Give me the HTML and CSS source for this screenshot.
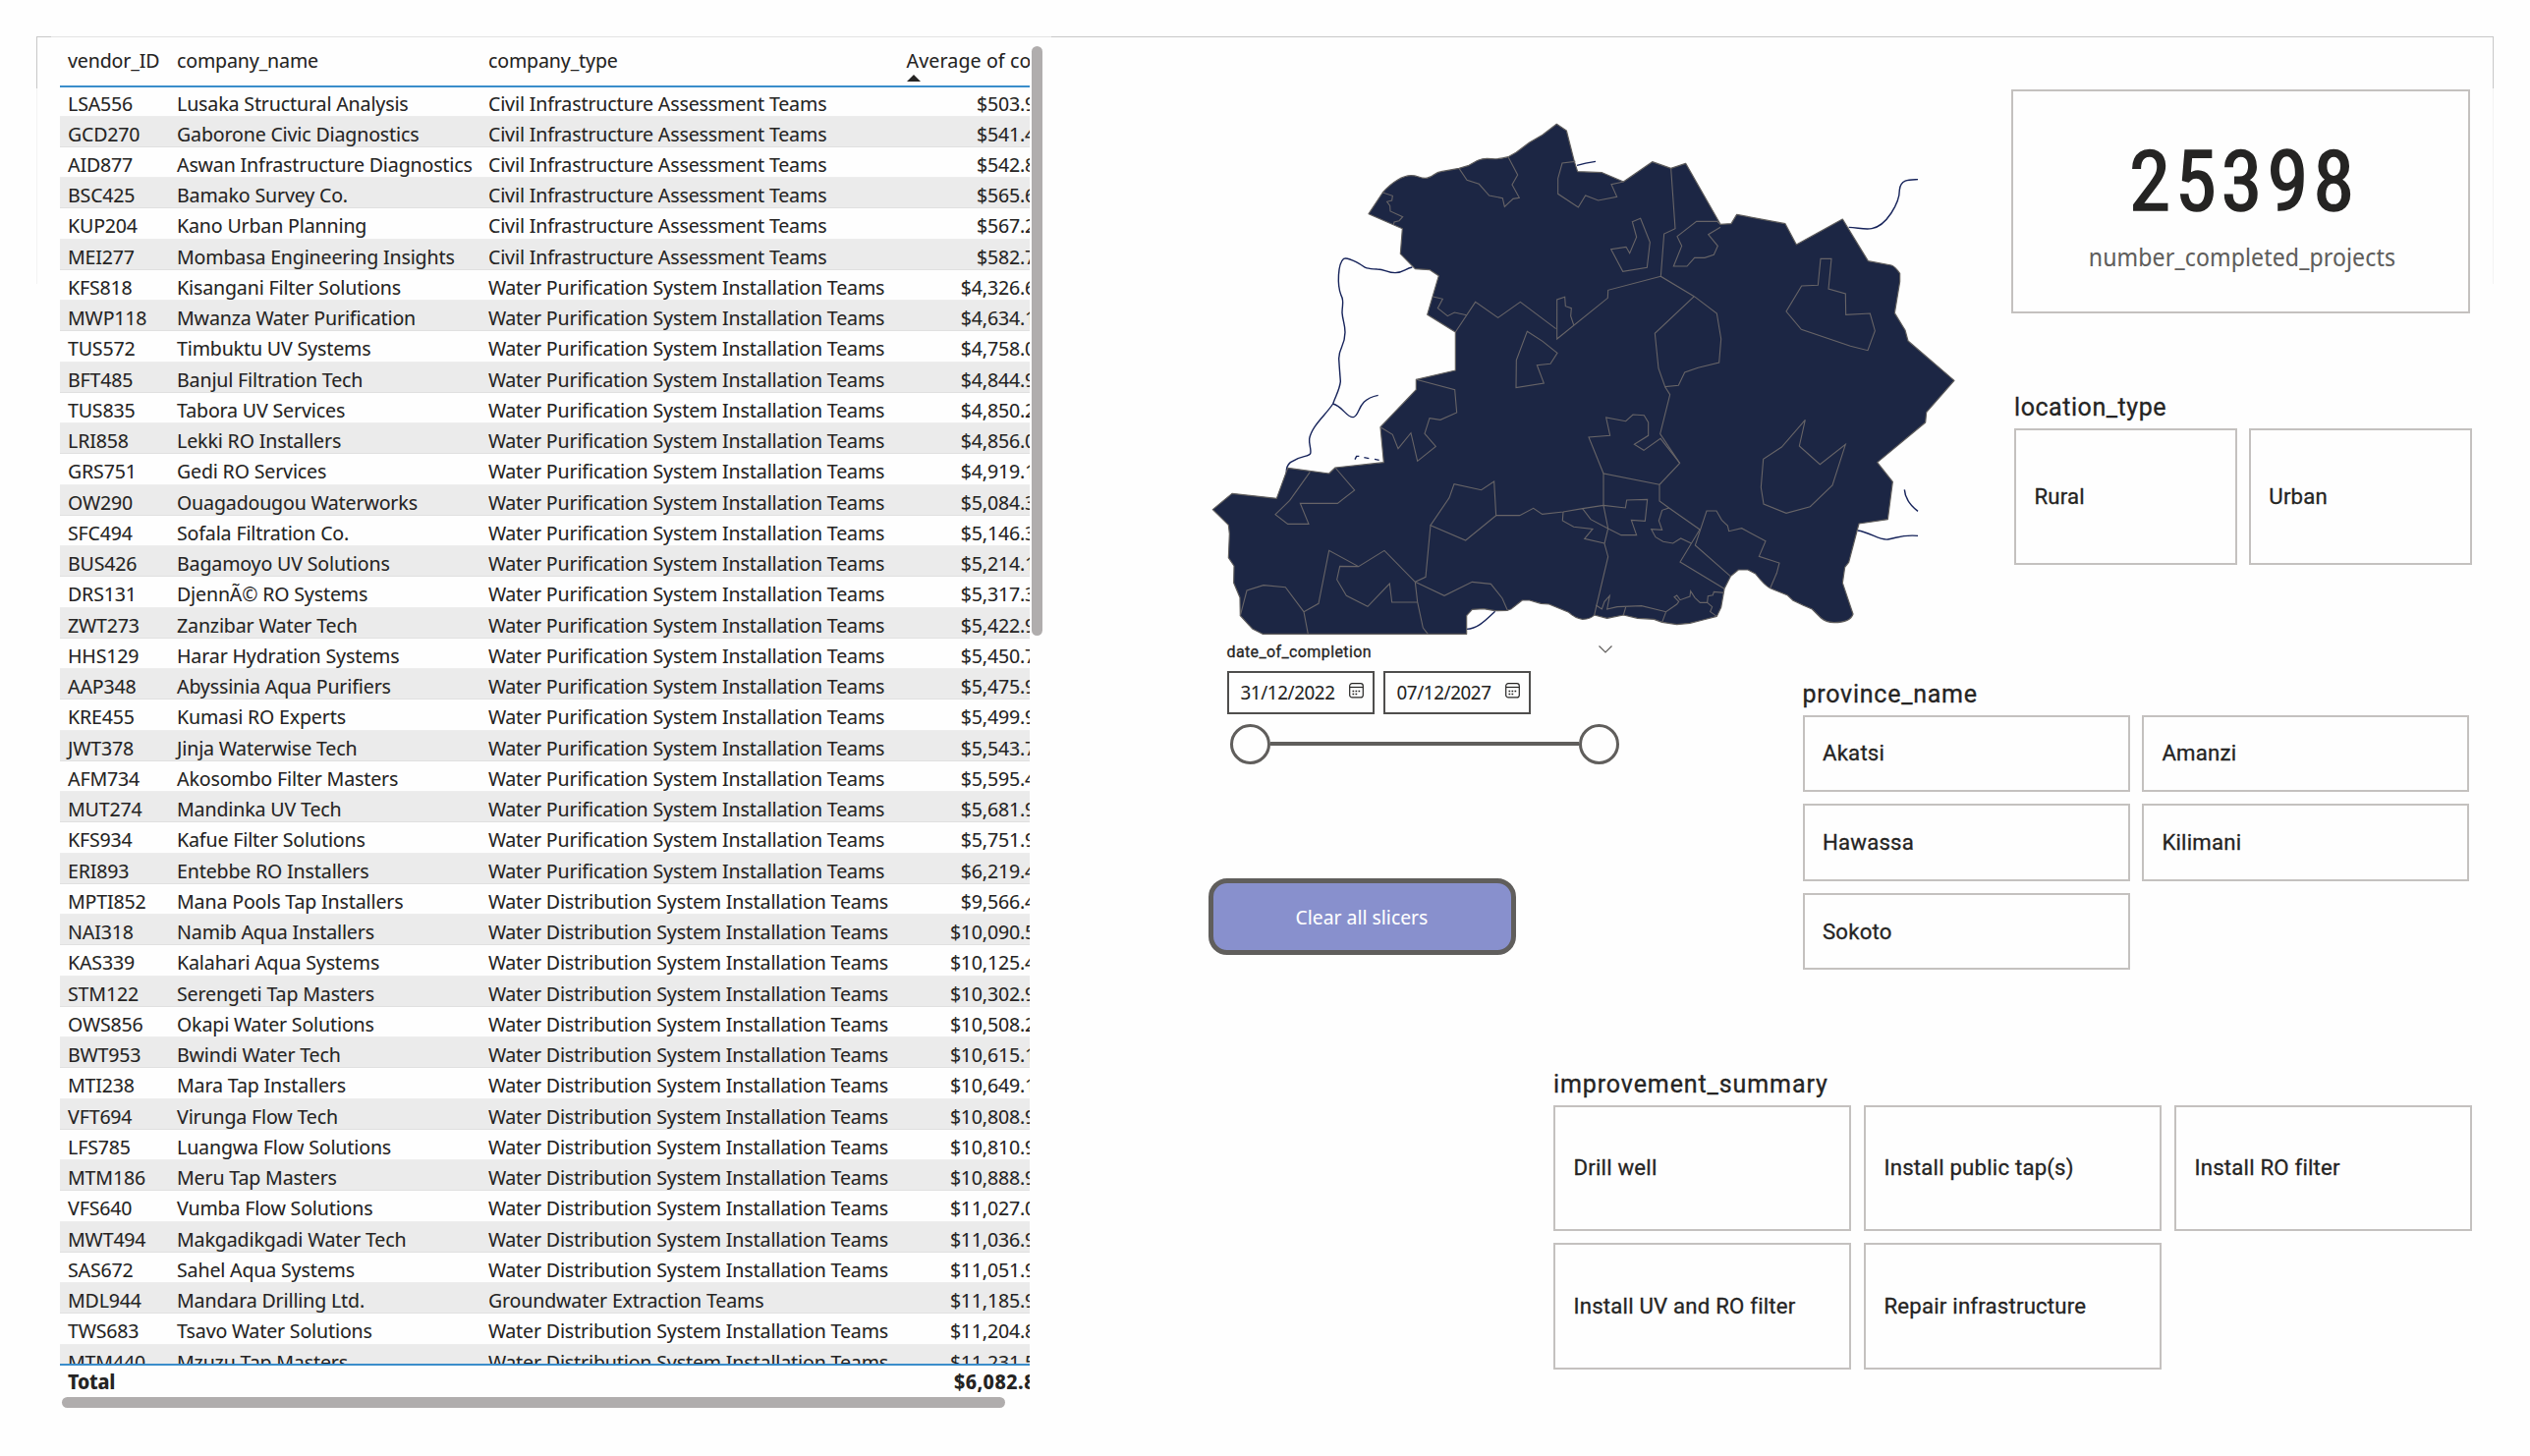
FILE: index.html
```
<!DOCTYPE html>
<html lang="en">
<head>
<meta charset="utf-8">
<title>Completed water projects</title>
<link rel="stylesheet" href="styles.css">
</head>
<body>
<main class="report">
  <section class="vendors">
    <div class="vendors-top">
      <div class="table">
        <div class="row head"><span>vendor_ID</span><span>company_name</span><span>company_type</span><span class="sorted">Average of co<svg class="sort" width="14" height="7" viewBox="0 0 14 7"><path d="M0 7 7 0 14 7z" fill="#252423"/></svg></span></div>
        <div class="body">
          <div class="row"><span>LSA556</span><span>Lusaka Structural Analysis</span><span>Civil Infrastructure Assessment Teams</span><span>$503.9</span></div>
          <div class="row"><span>GCD270</span><span>Gaborone Civic Diagnostics</span><span>Civil Infrastructure Assessment Teams</span><span>$541.4</span></div>
          <div class="row"><span>AID877</span><span>Aswan Infrastructure Diagnostics</span><span>Civil Infrastructure Assessment Teams</span><span>$542.8</span></div>
          <div class="row"><span>BSC425</span><span>Bamako Survey Co.</span><span>Civil Infrastructure Assessment Teams</span><span>$565.6</span></div>
          <div class="row"><span>KUP204</span><span>Kano Urban Planning</span><span>Civil Infrastructure Assessment Teams</span><span>$567.2</span></div>
          <div class="row"><span>MEI277</span><span>Mombasa Engineering Insights</span><span>Civil Infrastructure Assessment Teams</span><span>$582.7</span></div>
          <div class="row"><span>KFS818</span><span>Kisangani Filter Solutions</span><span>Water Purification System Installation Teams</span><span>$4,326.6</span></div>
          <div class="row"><span>MWP118</span><span>Mwanza Water Purification</span><span>Water Purification System Installation Teams</span><span>$4,634.1</span></div>
          <div class="row"><span>TUS572</span><span>Timbuktu UV Systems</span><span>Water Purification System Installation Teams</span><span>$4,758.0</span></div>
          <div class="row"><span>BFT485</span><span>Banjul Filtration Tech</span><span>Water Purification System Installation Teams</span><span>$4,844.9</span></div>
          <div class="row"><span>TUS835</span><span>Tabora UV Services</span><span>Water Purification System Installation Teams</span><span>$4,850.2</span></div>
          <div class="row"><span>LRI858</span><span>Lekki RO Installers</span><span>Water Purification System Installation Teams</span><span>$4,856.0</span></div>
          <div class="row"><span>GRS751</span><span>Gedi RO Services</span><span>Water Purification System Installation Teams</span><span>$4,919.1</span></div>
          <div class="row"><span>OW290</span><span>Ouagadougou Waterworks</span><span>Water Purification System Installation Teams</span><span>$5,084.3</span></div>
          <div class="row"><span>SFC494</span><span>Sofala Filtration Co.</span><span>Water Purification System Installation Teams</span><span>$5,146.3</span></div>
          <div class="row"><span>BUS426</span><span>Bagamoyo UV Solutions</span><span>Water Purification System Installation Teams</span><span>$5,214.1</span></div>
          <div class="row"><span>DRS131</span><span>DjennÃ© RO Systems</span><span>Water Purification System Installation Teams</span><span>$5,317.3</span></div>
          <div class="row"><span>ZWT273</span><span>Zanzibar Water Tech</span><span>Water Purification System Installation Teams</span><span>$5,422.9</span></div>
          <div class="row"><span>HHS129</span><span>Harar Hydration Systems</span><span>Water Purification System Installation Teams</span><span>$5,450.7</span></div>
          <div class="row"><span>AAP348</span><span>Abyssinia Aqua Purifiers</span><span>Water Purification System Installation Teams</span><span>$5,475.9</span></div>
          <div class="row"><span>KRE455</span><span>Kumasi RO Experts</span><span>Water Purification System Installation Teams</span><span>$5,499.9</span></div>
          <div class="row"><span>JWT378</span><span>Jinja Waterwise Tech</span><span>Water Purification System Installation Teams</span><span>$5,543.7</span></div>
          <div class="row"><span>AFM734</span><span>Akosombo Filter Masters</span><span>Water Purification System Installation Teams</span><span>$5,595.4</span></div>
          <div class="row"><span>MUT274</span><span>Mandinka UV Tech</span><span>Water Purification System Installation Teams</span><span>$5,681.9</span></div>
          <div class="row"><span>KFS934</span><span>Kafue Filter Solutions</span><span>Water Purification System Installation Teams</span><span>$5,751.9</span></div>
          <div class="row"><span>ERI893</span><span>Entebbe RO Installers</span><span>Water Purification System Installation Teams</span><span>$6,219.4</span></div>
          <div class="row"><span>MPTI852</span><span>Mana Pools Tap Installers</span><span>Water Distribution System Installation Teams</span><span>$9,566.4</span></div>
          <div class="row"><span>NAI318</span><span>Namib Aqua Installers</span><span>Water Distribution System Installation Teams</span><span>$10,090.5</span></div>
          <div class="row"><span>KAS339</span><span>Kalahari Aqua Systems</span><span>Water Distribution System Installation Teams</span><span>$10,125.4</span></div>
          <div class="row"><span>STM122</span><span>Serengeti Tap Masters</span><span>Water Distribution System Installation Teams</span><span>$10,302.9</span></div>
          <div class="row"><span>OWS856</span><span>Okapi Water Solutions</span><span>Water Distribution System Installation Teams</span><span>$10,508.2</span></div>
          <div class="row"><span>BWT953</span><span>Bwindi Water Tech</span><span>Water Distribution System Installation Teams</span><span>$10,615.1</span></div>
          <div class="row"><span>MTI238</span><span>Mara Tap Installers</span><span>Water Distribution System Installation Teams</span><span>$10,649.1</span></div>
          <div class="row"><span>VFT694</span><span>Virunga Flow Tech</span><span>Water Distribution System Installation Teams</span><span>$10,808.9</span></div>
          <div class="row"><span>LFS785</span><span>Luangwa Flow Solutions</span><span>Water Distribution System Installation Teams</span><span>$10,810.9</span></div>
          <div class="row"><span>MTM186</span><span>Meru Tap Masters</span><span>Water Distribution System Installation Teams</span><span>$10,888.9</span></div>
          <div class="row"><span>VFS640</span><span>Vumba Flow Solutions</span><span>Water Distribution System Installation Teams</span><span>$11,027.0</span></div>
          <div class="row"><span>MWT494</span><span>Makgadikgadi Water Tech</span><span>Water Distribution System Installation Teams</span><span>$11,036.9</span></div>
          <div class="row"><span>SAS672</span><span>Sahel Aqua Systems</span><span>Water Distribution System Installation Teams</span><span>$11,051.9</span></div>
          <div class="row"><span>MDL944</span><span>Mandara Drilling Ltd.</span><span>Groundwater Extraction Teams</span><span>$11,185.9</span></div>
          <div class="row"><span>TWS683</span><span>Tsavo Water Solutions</span><span>Water Distribution System Installation Teams</span><span>$11,204.8</span></div>
          <div class="row"><span>MTM440</span><span>Mzuzu Tap Masters</span><span>Water Distribution System Installation Teams</span><span>$11,231.5</span></div>
        </div>
        <div class="row total"><span>Total</span><span></span><span></span><span>$6,082.8</span></div>
      </div>
      <div class="scroll-y"></div>
    </div>
    <div class="scroll-x"></div>
  </section>

  <section class="side">
    <div class="band band-map">
      <svg class="map" width="780" height="550" viewBox="0 0 2340 1650">
        <g class="river">
          <path d="M652 516C630 520 625 533 600 533S570 522 545 522C500 520 510 516 490 505C470 495 455 485 443 490C425 505 422 570 435 602C445 620 438 630 438 655C440 680 447 690 447 715C446 760 430 755 428 795C430 830 432 850 433 865C430 890 420 905 410 933C390 965 345 1000 338 1040C336 1055 345 1075 341 1085C335 1097 315 1088 280 1112C270 1120 267 1130 268 1145"/>
          <path d="M410 933C440 940 450 975 472 974C495 970 480 920 548 907"/>
          <path d="M477 1103 482 1093H490M505 1097l15 3M537 1102l14 3"/>
          <path d="M1155 205Q1180 197 1212 193"/>
          <path d="M1985 394C2010 394 2030 402 2055 398C2100 390 2140 320 2140 280C2143 245 2175 249 2196 248"/>
          <path d="M2155 1195C2157 1225 2175 1245 2196 1261"/>
          <path d="M2012 1320C2050 1325 2080 1352 2105 1347C2140 1340 2150 1332 2196 1336"/>
          <path d="M818 1621C850 1620 870 1600 905 1567"/>
        </g>
        <path class="land" d="M519 353 562 288C590 255 625 236 648 236S672 244 692 244 720 227 740 224L795 214 825 205C850 190 860 184 880 184S905 190 945 179L970 165 1010 135 1050 112 1093 79 1123 99 1147 193 1157 224 1232 227 1297 255 1385 194 1442 214 1487 199 1593 385 1626 383 1643 355 1791 383 1825 447 1966 369 2044 497 2115 510Q2126 513 2141 535V560L2125 656 2157 708 2166 741 2307 862 2222 959 2219 990 2072 1112 2119 1171 2104 1286 2016 1299 1985 1417 1973 1432 1966 1480 1998 1575Q1990 1601 1940 1601 1915 1600 1900 1587L1873 1560 1845 1548 1815 1534 1797 1517 1745 1496Q1730 1490 1700 1452L1677 1440H1648L1624 1460 1605 1498 1595 1555 1582 1582 1540 1593 1500 1603 1460 1607 1415 1600 1390 1591 1340 1588 1297 1578 1247 1588 1208 1578Q1198 1590 1172 1591 1150 1588 1130 1570L1070 1545 1045 1543 1010 1533H988L955 1559 943 1564 905 1565 870 1559 835 1561 818 1580V1636H195L165 1621 127 1580 126 1525 107 1480 108 1428 91 1403 94 1330 91 1303 43 1256 102 1207 238 1222 272 1129 398 1146 417 1128 565 1112 555 1004 664 890V859L784 831V714L698 661 733 542 706 524 661 521 616 475 622 398z"/>
        <g class="border">
          <path d="M562 288 592 298 590 312 575 316 584 328 585 345 623 362 612 374 597 378 595 386"/>
          <path d="M795 214 819 250 856 262 887 297 928 305 934 331 960 307 979 304 957 264 974 234 945 179"/>
          <path d="M1150 193 1110 198 1097 245V292L1159 333 1181 297 1220 312 1277 301 1260 263 1297 255"/>
          <path d="M716 606 745 613 730 641 760 665 781 654 818 662"/>
          <path d="M784 714 845 622 914 670 982 622 1091 704"/>
          <path d="M1145 692 1136 665 1138 641 1120 635 1118 607 1094 615V735L1249 610 1250 586 1411 544"/>
          <path d="M1003 712 1050 742 1095 778 1074 811 1033 815 1054 870 969 884 970 800z"/>
          <path d="M664 859 782 890 788 960 738 982 705 977 690 1024 724 1063 668 1108 648 1022 609 1070 592 1027 555 1004"/>
          <path d="M1324 377 1349 367 1378 440 1369 517 1295 529 1259 461 1305 454 1316 473 1337 424z"/>
          <path d="M1442 214 1455 398 1421 414 1411 544 1513 605 1582 657 1595 735 1589 807 1525 823 1484 837 1465 877 1424 881 1404 825 1393 718 1513 605"/>
          <path d="M1424 881 1439 905 1409 1025 1469 1114 1407 1180V1230L1436 1251 1530 1317 1470 1416 1605 1498"/>
          <path d="M1593 385 1583 376H1520L1461 422 1475 451 1450 513H1491L1514 487H1545L1573 478 1585 451 1556 416 1593 394"/>
          <path d="M1899 490H1932L1923 582 1975 597 1976 661 2050 657 2065 710 2043 770 1990 757 1840 706 1794 651 1841 573 1891 571z"/>
          <path d="M1236 1146 1191 1035 1256 1030 1244 975 1304 986 1326 966 1360 968 1373 990V1030L1330 1057 1359 1075 1410 1039 1469 1114"/>
          <path d="M1407 1180 1236 1146V1243L1250 1314 1239 1360 1250 1400 1215 1548 1208 1578"/>
          <path d="M908 1274H980L1022 1252 1049 1270 1113 1263 1172 1253 1236 1243 1303 1251 1307 1227 1370 1225 1363 1291 1321 1288 1337 1334H1290L1250 1314 1197 1286 1172 1253"/>
          <path d="M1113 1263 1111 1290 1145 1309 1203 1315 1178 1345 1239 1359"/>
          <path d="M1436 1251 1415 1258 1405 1290 1415 1318 1382 1316 1395 1340 1418 1354 1448 1359 1472 1344 1504 1359"/>
          <path d="M1745 1496 1765 1450 1773 1419 1711 1399 1731 1352 1658 1313 1619 1322 1615 1305 1597 1288 1581 1260H1551L1516 1365 1624 1460"/>
          <path d="M1852 982 1834 1062 1897 1118 1975 1057 1935 1182 1867 1247 1794 1267 1725 1239 1717 1188 1724 1102 1780 1065z"/>
          <path d="M1213 1548 1231 1560 1239 1537 1255 1519 1247 1560 1278 1553 1352 1550 1427 1568 1460 1545 1466 1537 1452 1523 1460 1518 1470 1532 1500 1521 1502 1505 1515 1525 1531 1540 1553 1540 1555 1520 1570 1517 1573 1507 1605 1510M1427 1568 1415 1600M1304 1554 1297 1578M1553 1540 1568 1553 1562 1568 1582 1582"/>
          <path d="M340 1141 278 1228 234 1271 272 1300H336L310 1237H424L476 1197 417 1128"/>
          <path d="M708 1304 765 1220 780 1178 863 1196 902 1170 908 1274 815 1350z"/>
          <path d="M708 1304 693 1462 661 1477 567 1381 488 1430 398 1381 366 1543 321 1568 265 1493 198 1487 147 1503 127 1580M321 1568 334 1636"/>
          <path d="M488 1430 431 1429 422 1470 451 1519 516 1552 583 1482 590 1539H668M661 1477 668 1538 685 1617 700 1636M661 1477 750 1519 835 1477 892 1483 927 1527 943 1564"/>
        </g>
      </svg>
      <div class="kpi-col">
        <div class="kpi">
          <div class="kpi-value">25398</div>
          <div class="kpi-label">number_completed_projects</div>
        </div>
        <div class="slicer location">
          <h2>location_type</h2>
          <div class="tiles"><div class="tile">Rural</div><div class="tile">Urban</div></div>
        </div>
      </div>
    </div>

    <div class="band band-controls">
      <div class="controls">
        <div class="date-head"><h3>date_of_completion</h3>
          <svg width="14" height="8" viewBox="0 0 14 8"><path d="M.5.5 7 7 13.500.5" fill="none" stroke="#605e5c" stroke-width="1.2"/></svg>
        </div>
        <div class="dates">
          <div class="date">31/12/2022<svg width="15" height="16" viewBox="0 0 15 16"><rect x=".7" y=".7" width="13.600" height="14.200" rx="2.500"/><path d="M1 4.500H14"/><path d="M3.500 8.500h8M3.500 11.500h5" stroke-width="1.700" stroke-dasharray="1.700 1.300"/></svg></div>
          <div class="date">07/12/2027<svg width="15" height="16" viewBox="0 0 15 16"><rect x=".7" y=".7" width="13.600" height="14.200" rx="2.500"/><path d="M1 4.500H14"/><path d="M3.500 8.500h8M3.500 11.500h5" stroke-width="1.700" stroke-dasharray="1.700 1.300"/></svg></div>
        </div>
        <div class="slider"><i class="knob"></i><i class="track"></i><i class="knob"></i></div>
        <div class="clear">Clear all slicers</div>
      </div>
      <div class="slicer province">
        <h2>province_name</h2>
        <div class="tiles"><div class="tile">Akatsi</div><div class="tile">Amanzi</div><div class="tile">Hawassa</div><div class="tile">Kilimani</div><div class="tile">Sokoto</div></div>
      </div>
    </div>

    <div class="slicer improvement">
      <h2>improvement_summary</h2>
      <div class="tiles"><div class="tile">Drill well</div><div class="tile">Install public tap(s)</div><div class="tile">Install RO filter</div><div class="tile">Install UV and RO filter</div><div class="tile">Repair infrastructure</div></div>
    </div>
  </section>
</main>
</body>
</html>
```
FILE: styles.css
```
* { box-sizing: border-box; }
body { margin: 0; background: #fff; color: #252423; font-family: "Noto Sans Display", "Noto Sans", sans-serif; }
h2, h3 { margin: 0; font-family: Roboto, sans-serif; font-weight: 400; white-space: nowrap; }

.report {
  display: flex;
  width: 2575px;
  height: 1482px;
  padding: 37px 59px 0 61px;
  background:
    linear-gradient(#c8c8c8, #c8c8c8) 37px 37px / 15px 1px no-repeat,
    linear-gradient(#e3e3e3, #e3e3e3) 52px 37px / 1018px 1px no-repeat,
    linear-gradient(#c8c8c8, #c8c8c8) 1070px 37px / 1468px 1px no-repeat,
    linear-gradient(#c8c8c8 53px, #f3f3f3 53px) 37px 37px / 1px 252px no-repeat,
    linear-gradient(#c8c8c8 53px, #f3f3f3 53px) 2537px 37px / 1px 252px no-repeat,
    #fefefe;
}

/* vendor table */
.vendors { width: 1001px; flex: none; padding-top: 1px; }
.vendors-top { display: flex; gap: 1.500px; }
.table { width: 987px; height: 1382px; overflow: hidden; font-size: 20.8px; letter-spacing: -0.18px; white-space: nowrap; }
.row { display: grid; grid-template-columns: 111px 317px 425.500px 140px; width: 993px; height: 31.26px; line-height: 34.200px; padding-left: 8px; }
.row span:last-child { text-align: right; padding-right: 8.500px; }
.head { height: 50.500px; line-height: 47px; border-bottom: 2px solid #3a8dcb; }
.row.head span:last-child { text-align: left; position: relative; padding-right: 0; letter-spacing: .1px; }
.sort { position: absolute; left: 0; top: 38px; }
.body { height: 1299.500px; overflow: hidden; }
.body .row { border-bottom: 1px solid #ededed; }
.body .row:first-child { height: 30px; line-height: 32.500px; }
.body .row:nth-child(even) { background: #ebebeb; border-bottom-color: #e0e0e0; }
.total { border-top: 2px solid #3a8dcb; font-weight: 700; line-height: 33px; height: 34px; }
.total span:last-child { letter-spacing: .5px; }
.scroll-y { width: 11.500px; height: 600px; margin-top: 9px; border-radius: 6px; background: #b0adad; }
.scroll-x { width: 960px; height: 11px; margin: 1.500px 0 0 1.500px; border-radius: 6px; background: #b0adad; }

/* right side */
.side { margin-left: 158px; flex: none; width: 1296px; padding-top: 54px; }
.band { display: flex; }
.band-map { height: 563.500px; }
.band-controls { height: 434px; }
.map { margin-top: 9px; flex: none; }
.land { fill: #1c2644; stroke: #5f5d5c; stroke-width: 3.500; stroke-linejoin: round; }
.border path { fill: none; stroke: #676467; stroke-width: 3.300; }
.river path { fill: none; stroke: #16235a; stroke-width: 4.200; }

.kpi-col { margin-left: 47px; width: 469px; }
.kpi { width: 467px; height: 228px; border: 2px solid #c4c1bf; text-align: center; white-space: nowrap; }
.kpi-value { margin-top: 42px; font: 400 85px/100px "Roboto Condensed", Roboto, sans-serif; letter-spacing: 4.800px; padding-left: 7px; -webkit-text-stroke: 1.600px #252423; }
.kpi-label { margin-top: 9.500px; padding-left: 3px; font-size: 24.500px; line-height: 34px; letter-spacing: .1px; color: #605e5c; }

.slicer h2 { font-size: 25px; line-height: 30px; letter-spacing: .9px; margin-bottom: 6px; -webkit-text-stroke: .3px #252423; }
.tiles { display: grid; gap: 12.300px; }
.tile { display: flex; align-items: center; border: 2px solid #c4c1bf; padding: 0 0 1px 18.500px; font: 400 22.200px/30px Roboto, sans-serif; letter-spacing: .2px; -webkit-text-stroke: .3px #252423; white-space: nowrap; }
.location { margin: 81px 0 0 3px; }
.location h2 { letter-spacing: .55px; }
.location .tiles { grid-template-columns: 226.500px 227px; grid-auto-rows: 139px; }
.province { margin: 37px 0 0 185px; width: 678.500px; }
.province h2 { letter-spacing: .75px; }
.province .tiles { grid-template-columns: 1fr 1fr; grid-auto-rows: 78.400px; }
.improvement { margin-left: 361px; width: 935px; }
.improvement .tiles { grid-template-columns: repeat(3, 1fr); grid-auto-rows: 128.800px; gap: 12.200px 13px; }

.controls { width: 420px; margin-left: 9.500px; flex: none; }
.date-head { display: flex; justify-content: space-between; width: 411px; padding-left: 19px; height: 28px; }
.date-head h3 { font-size: 16px; line-height: 17px; letter-spacing: .38px; -webkit-text-stroke: .3px #252423; }
.date-head svg { margin-top: 2px; }
.dates { display: flex; gap: 8.500px; padding-left: 19px; }
.date { display: flex; align-items: center; justify-content: space-between; width: 150.500px; height: 44px; border: 2px solid #4f4e4d; padding: 0 9px 0 12px; font-size: 20px; letter-spacing: -.4px; }
.date svg { margin-top: -3px; fill: none; stroke: #252423; stroke-width: 1.200; }
.slider { display: flex; align-items: center; height: 41px; margin: 10px 0 0 22.500px; width: 396px; }
.knob { width: 41px; height: 41px; border: 3px solid #605e5c; border-radius: 50%; }
.track { flex: 1; height: 4.500px; background: #605e5c; }
.clear { width: 313px; height: 77.500px; margin-top: 116.500px; border: 5px solid #605e5c; border-radius: 19px; background: #8890cd; color: #fff; text-align: center; font-size: 20.500px; line-height: 68px; }
```
